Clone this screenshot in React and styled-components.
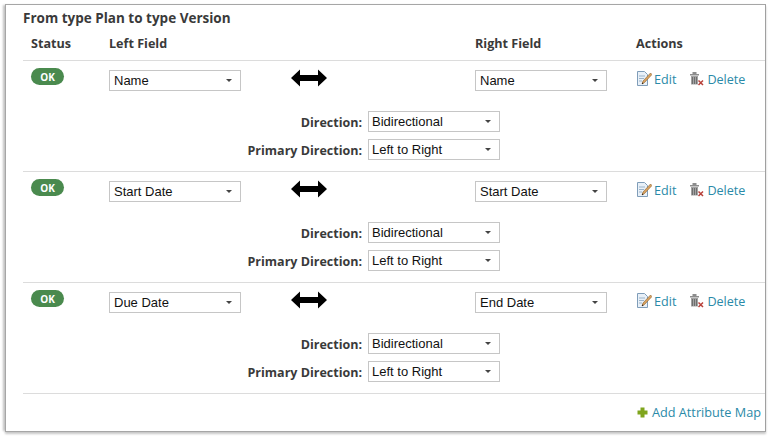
import React from "react";
import styled, { createGlobalStyle } from "styled-components";

const Global = createGlobalStyle`
  html, body { margin: 0; padding: 0; background: #fff; }
  body { width: 771px; height: 437px; overflow: hidden; font-family: "Open Sans", "Liberation Sans", sans-serif; }
`;

const Page = styled.div`
  padding: 4px 5px 5px 5px;
  width: 771px;
  height: 437px;
  box-sizing: border-box;
`;

const Panel = styled.div`
  width: 761px;
  height: 428px;
  box-sizing: border-box;
  border: 1px solid #a6a6a6;
  border-right-color: #a0a0a0;
  box-shadow: -3px 0 2px -1px #c4c4c4, 0 2px 2px #c8c8c8;
  padding: 4px 0 0 17px;
  background: #fff;
`;

const Title = styled.h2`
  margin: 0;
  font-size: 13.5px;
  line-height: 18px;
  font-weight: 700;
  color: #3a3a3a;
`;

const Cols = styled.div`
  display: grid;
  grid-template-columns: 86px 366px 161px 1fr;
`;

const Head = styled(Cols)`
  height: 33px;
  padding-top: 8px;
  box-sizing: border-box;
`;

const HeadCell = styled.div`
  font-size: 12.6px;
  font-weight: 700;
  line-height: 18px;
  color: #3a3a3a;
  padding-left: ${(p) => p.$pad ?? 0}px;
`;

const Row = styled.div`
  height: 111px;
  box-sizing: border-box;
  border-top: 1px solid #dcdcdc;
  padding-top: 9px;
`;

const Pill = styled.span`
  display: block;
  margin: -2px 0 0 8px;
  width: 33px;
  height: 17px;
  border-radius: 9px;
  background: #4a8a4e;
  color: #fff;
  font-size: 10px;
  font-weight: 700;
  line-height: 18px;
  text-align: center;
`;

const LeftCell = styled.div`
  display: flex;
  align-items: flex-start;
`;

const SelectBox = styled.div`
  width: 132px;
  height: 21px;
  box-sizing: border-box;
  border: 1px solid #c6c6c6;
  background: #fff;
  display: flex;
  align-items: center;
  justify-content: space-between;
  padding: ${(p) => (p.$raised ? "0 8px 1px 3px" : "0 8px 0 4px")};
  font-family: "Liberation Sans", Arial, sans-serif;
  font-size: 13px;
  color: #111;
  &::after {
    content: "";
    margin-top: ${(p) => (p.$raised ? 1 : 0)}px;
    border-left: 3px solid transparent;
    border-right: 3px solid transparent;
    border-top: 3px solid #444;
  }
`;

const ArrowWrap = styled.div`
  margin: -1px 0 0 50px;
  height: 18px;
  display: flex;
`;

const Actions = styled.div`
  display: flex;
  align-items: center;
  height: 20px;
  padding-left: 1px;
`;

const ActionLink = styled.a`
  display: flex;
  align-items: center;
  gap: 2px;
  margin-right: 13px;
  font-size: 12.6px;
  line-height: 18px;
  color: #2a8aa8;
  svg {
    margin-top: -3px;
  }
`;

const DirGrid = styled.div`
  display: grid;
  grid-template-columns: 339px 132px;
  column-gap: 6px;
  row-gap: 7px;
  margin-top: 20px;
  align-items: center;
`;

const DirLabel = styled.label`
  text-align: right;
  font-size: 12.5px;
  font-weight: 700;
  color: #3a3a3a;
  line-height: 21px;
  position: relative;
  top: 1px;
`;

const Footer = styled.div`
  border-top: 1px solid #dcdcdc;
  display: flex;
  justify-content: flex-end;
  align-items: center;
  height: 36px;
  padding-right: 4px;
`;

const AddLink = styled.a`
  display: flex;
  align-items: center;
  gap: 4px;
  font-size: 12.7px;
  color: #2a8aa8;
`;

const BiArrow = () => (
  <svg width="36" height="18" viewBox="0 0 36 18">
    <path d="M0 9 L9 0.5 V6 H27 V0.5 L36 9 L27 17.5 V12 H9 V17.5 Z" fill="#000" />
  </svg>
);

const EditIcon = () => (
  <svg width="15" height="17" viewBox="0 0 15 17">
    <path d="M0.5 1.5 H7.5 L10.5 4.5 V15.5 H0.5 Z" fill="#e8f0f8" stroke="#7f9db9" />
    <path d="M2 6 H8 M2 8.5 H7 M2 11 H5" stroke="#9bb3c9" />
    <path d="M13.5 3 L15 4.5 L7.5 12.5 L5 14 L6 11 Z" fill="#d9a25f" stroke="#8a6233" strokeWidth="0.6" />
    <path d="M5 14 L5.5 12.6 L6.5 13.4 Z" fill="#000" />
  </svg>
);

const TrashIcon = () => (
  <svg width="16" height="15" viewBox="0 0 16 15">
    <path d="M1 3 H10 V4.5 H1 Z M3.5 1 H7.5 V3 H3.5 Z" fill="#8d8d8d" />
    <path d="M2 5 H9 V13.5 H2 Z" fill="#a3a3a3" />
    <path d="M3.5 6 V13 M5.5 6 V13 M7.5 6 V13" stroke="#6e6e6e" />
    <path d="M9.5 9.5 L14 14 M14 9.5 L9.5 14" stroke="#b8413a" strokeWidth="1.5" />
  </svg>
);

const PlusIcon = () => (
  <svg width="11" height="11" viewBox="0 0 11 11">
    <path d="M3.5 0.5 H7.5 V3.5 H10.5 V7.5 H7.5 V10.5 H3.5 V7.5 H0.5 V3.5 H3.5 Z" fill="#7fa51d" />
  </svg>
);

const rows = [
  ["Name", "Name"],
  ["Start Date", "Start Date"],
  ["Due Date", "End Date"],
];

export default function App() {
  return (
    <Page>
      <Global />
      <Panel>
        <Title>From type Plan to type Version</Title>
        <Head>
          <HeadCell $pad={8}>Status</HeadCell>
          <HeadCell>Left Field</HeadCell>
          <HeadCell>Right Field</HeadCell>
          <HeadCell>Actions</HeadCell>
        </Head>
        {rows.map(([left, right]) => (
          <Row key={left}>
            <Cols>
              <Pill>OK</Pill>
              <LeftCell>
                <SelectBox>{left}</SelectBox>
                <ArrowWrap><BiArrow /></ArrowWrap>
              </LeftCell>
              <SelectBox>{right}</SelectBox>
              <Actions>
                <ActionLink><EditIcon />Edit</ActionLink>
                <ActionLink><TrashIcon />Delete</ActionLink>
              </Actions>
            </Cols>
            <DirGrid>
              <DirLabel>Direction:</DirLabel>
              <SelectBox $raised>Bidirectional</SelectBox>
              <DirLabel>Primary Direction:</DirLabel>
              <SelectBox $raised>Left to Right</SelectBox>
            </DirGrid>
          </Row>
        ))}
        <Footer>
          <AddLink><PlusIcon />Add Attribute Map</AddLink>
        </Footer>
      </Panel>
    </Page>
  );
}
